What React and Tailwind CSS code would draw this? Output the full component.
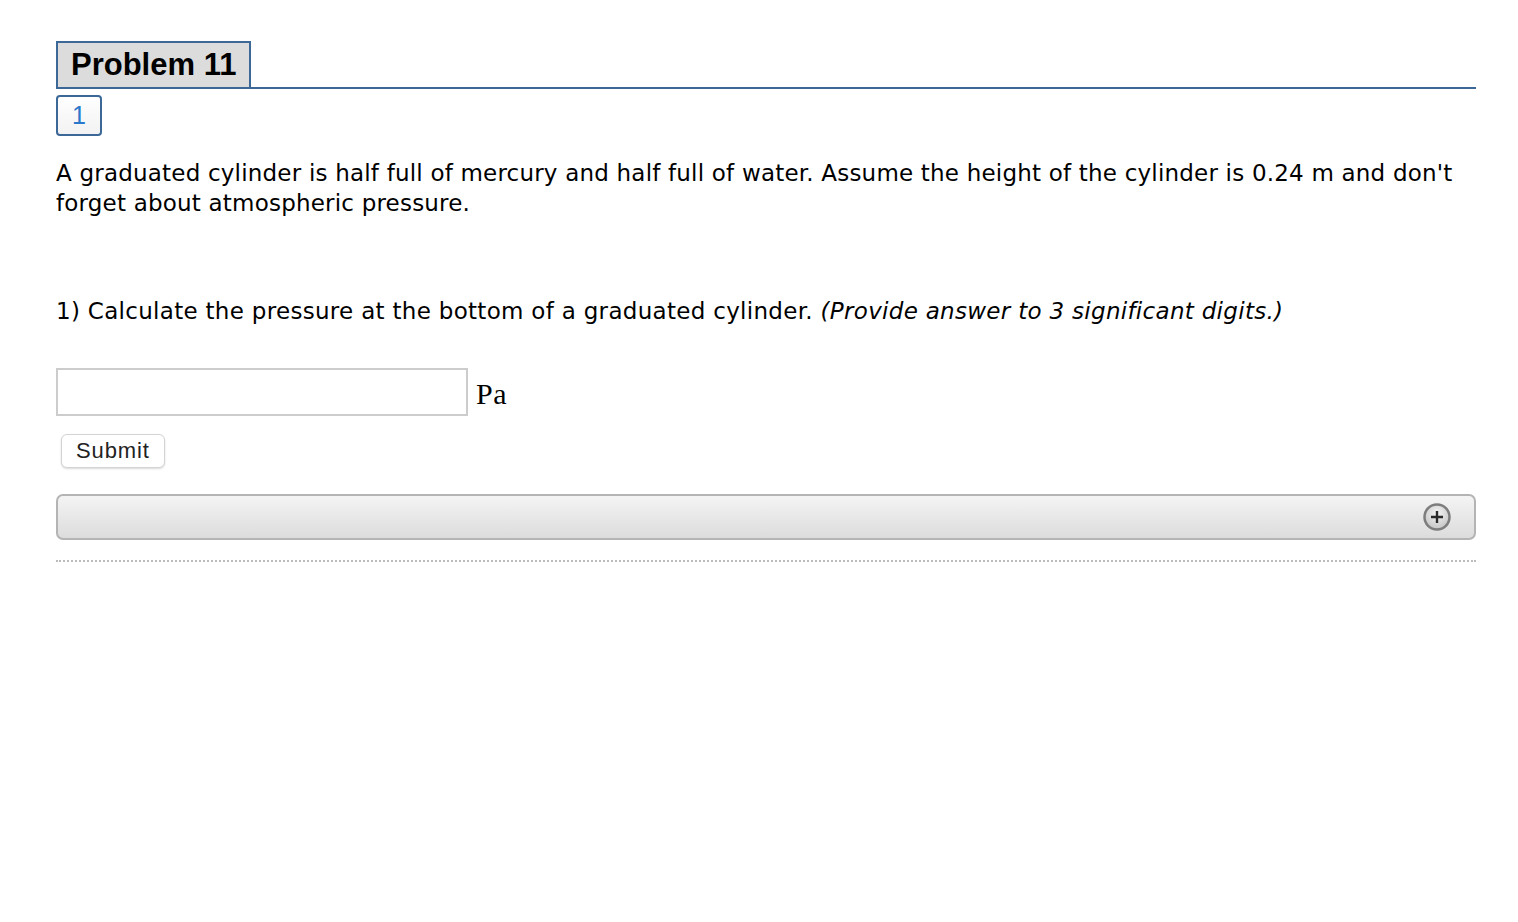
import React from "react";

const App = () => {
  return (
    <div className="min-h-screen bg-white pl-[56px] pr-[42px] pt-[41px] text-black">
      <div className="flex items-end border-b-2 border-[#3b6896]">
        <div className="-mb-[2px] border-2 border-[#3b6896] bg-[#dcdcdc] px-[13px] pt-[3px] pb-[3px] font-['Liberation_Sans',Arial,sans-serif] text-[31px] font-bold leading-[38px]">
          Problem 11
        </div>
      </div>

      <div className="mt-[6px] flex h-[41px] w-[46px] items-center justify-center rounded-[4px] border-2 border-[#3b6896] bg-gradient-to-b from-white to-[#f2f2f2] font-['Liberation_Sans',Arial,sans-serif] text-[25px] text-[#2a78cc]">
        1
      </div>

      <p className="mt-[22px] font-['DejaVu_Sans',sans-serif] text-[23px] leading-[30px] tracking-[0.2px]">
        A graduated cylinder is half full of mercury and half full of water. Assume the height of the cylinder is 0.24 m and don't forget about atmospheric pressure.
      </p>

      <p className="mt-[78px] font-['DejaVu_Sans',sans-serif] text-[23px] leading-[30px] tracking-[0.3px]">
        1) Calculate the pressure at the bottom of a graduated cylinder. <i>(Provide answer to 3 significant digits.)</i>
      </p>

      <div className="mt-[41px] flex items-center gap-[8px]">
        <input className="h-[48px] w-[412px] border-2 border-[#cccccc] bg-white outline-none" />
        <span className="mt-[4px] font-['Liberation_Serif','DejaVu_Serif',serif] text-[30px] tracking-[0.5px]">Pa</span>
      </div>

      <button className="ml-[5px] mt-[18px] h-[34px] rounded-[6px] border border-[#d4d4d4] bg-white px-[14px] font-['Liberation_Sans',Arial,sans-serif] text-[22px] leading-none tracking-[0.9px] text-[#222] shadow-[0_1px_2px_rgba(0,0,0,0.15)]">
        Submit
      </button>

      <div className="mt-[26px] flex h-[46px] items-center justify-end rounded-[7px] border-2 border-[#b4b4b4] bg-gradient-to-b from-[#f4f4f4] to-[#dcdcdc] pr-[22px]">
        <svg width="30" height="30" viewBox="0 0 30 30">
          <defs>
            <radialGradient id="g" cx="50%" cy="35%" r="65%">
              <stop offset="0%" stopColor="#f4f4f4" />
              <stop offset="100%" stopColor="#c4c4c4" />
            </radialGradient>
          </defs>
          <circle cx="15" cy="15" r="12.5" fill="url(#g)" stroke="#7d7d7d" strokeWidth="2.5" />
          <path d="M15 9v12M9 15h12" stroke="#2a2a2a" strokeWidth="2.4" />
        </svg>
      </div>

      <div className="mt-[20px] border-t-2 border-dotted border-[#bcbcbc]" />
    </div>
  );
};

export default App;
